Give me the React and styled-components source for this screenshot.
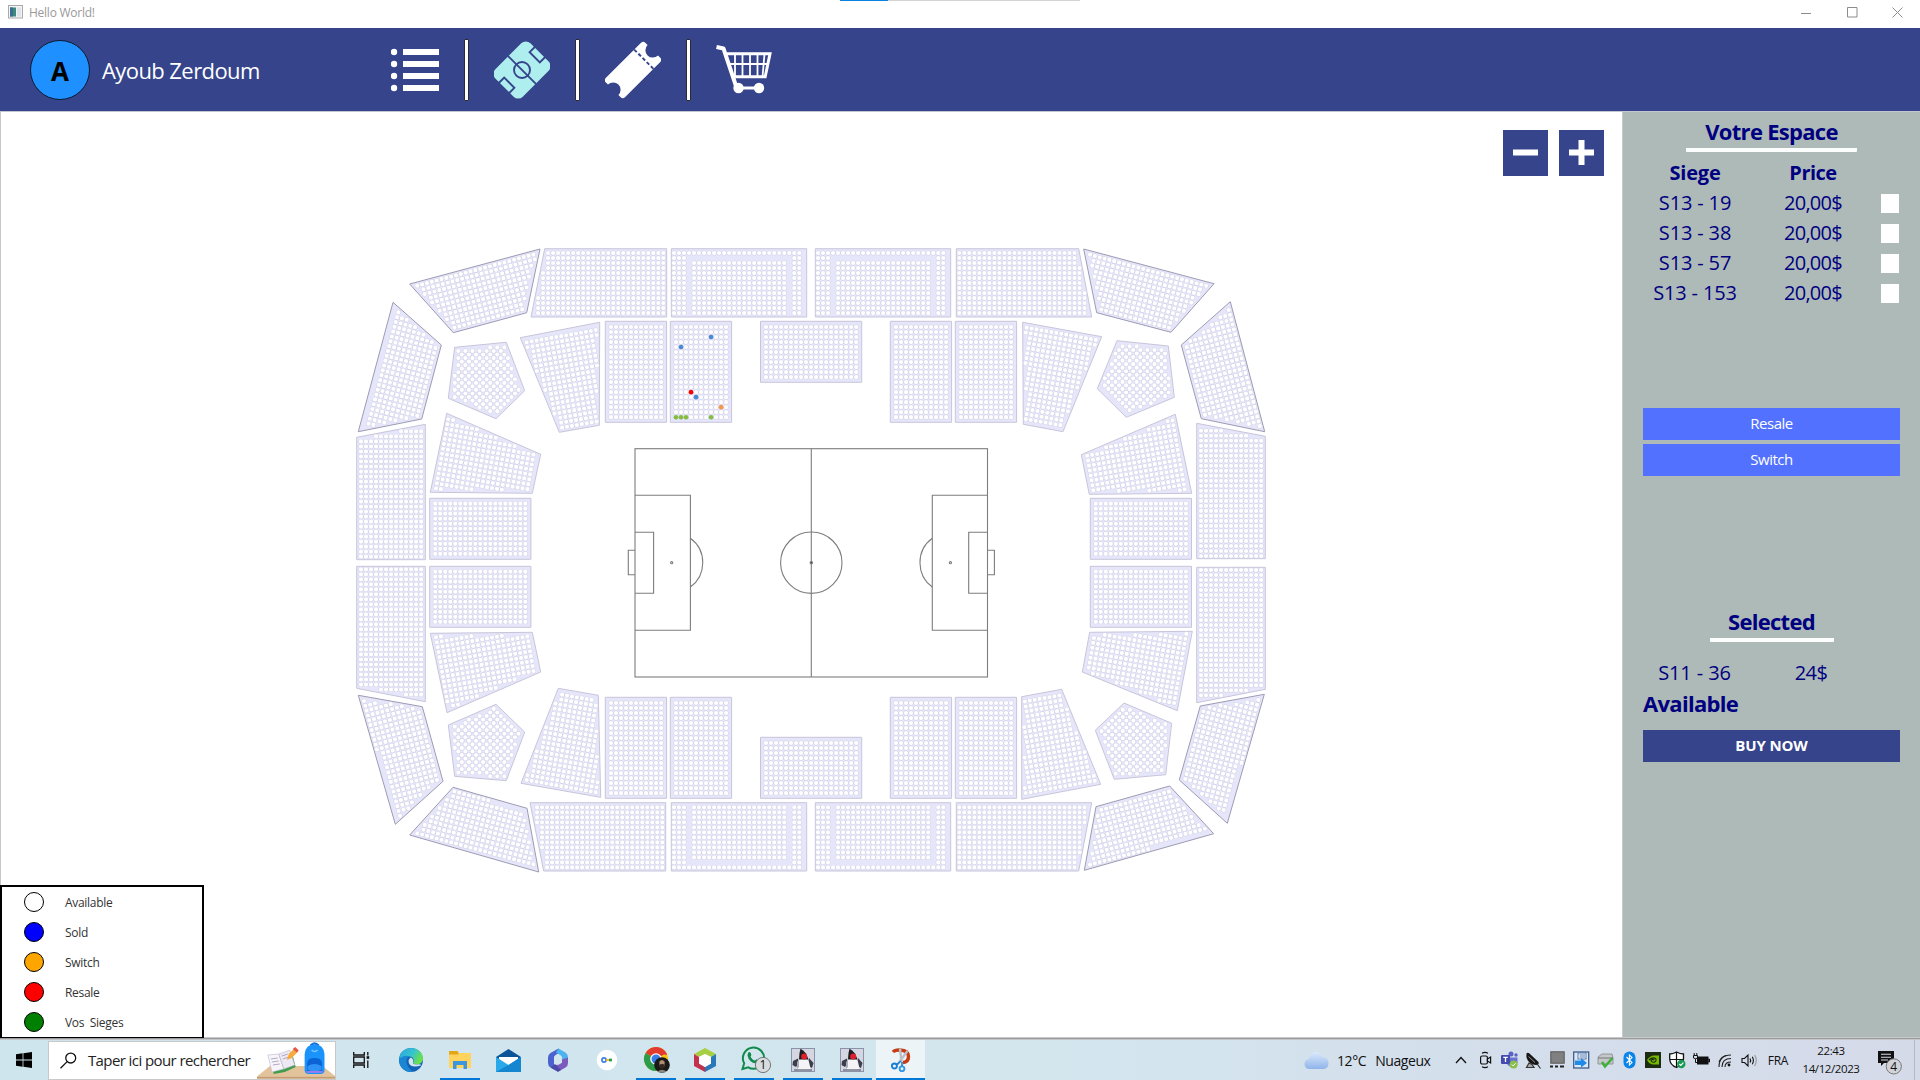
import React from "react";
import styled, { createGlobalStyle, css } from "styled-components";

const GlobalStyle = createGlobalStyle`
  * { box-sizing: border-box; }
  body { margin: 0; background: #fff; font-family: "Open Sans", "Noto Sans", sans-serif; }
  button { font: inherit; border: 0; padding: 0; }
  svg { display: block; }
`;

const NAVY = "#35448b";

const Window = styled.div`
  width: 1920px;
  height: 1080px;
  display: flex;
  flex-direction: column;
  overflow: hidden;
`;

/* ---------- title bar ---------- */
const TitleBar = styled.div`
  position: relative;
  height: 28px;
  flex: none;
  display: flex;
  align-items: center;
  padding: 0 17px 4px 8px;
  font-size: 12px;
  letter-spacing: -0.25px;
  color: #999;
`;
const TitleText = styled.span`
  margin-left: 5px;
  flex: 1;
`;
const WindowControls = styled.div`
  display: flex;
  gap: 34.5px;
`;
const LoadingStrip = styled.div`
  position: absolute;
  top: 0;
  left: 840px;
  width: 240px;
  height: 1px;
  background: linear-gradient(to right, #0a84e0 48px, #d4d4d4 48px);
`;

/* ---------- header ---------- */
const Header = styled.header`
  height: 84px;
  flex: none;
  display: flex;
  align-items: center;
  padding: 1px 0 0 30px;
  background: ${NAVY};
  border-bottom: 1px solid #c4c6d4;
`;
const Avatar = styled.div`
  width: 60px;
  height: 60px;
  border-radius: 50%;
  border: 1px solid #0a1a30;
  background: #1e90ff;
  display: flex;
  align-items: center;
  justify-content: center;
  font-size: 26px;
  font-weight: 700;
  line-height: 60px;
  padding-top: 2px;
  color: #000;
`;
const UserName = styled.div`
  width: 289px;
  margin-left: 12px;
  font-size: 22px;
  line-height: 30px;
  letter-spacing: -0.58px;
  color: #fff;
`;
const Nav = styled.nav`
  display: flex;
  align-items: center;
  gap: 25px;
`;
const Separator = styled.div`
  width: 5px;
  height: 62px;
  background: #fff;
  border: 1px solid #2b2b36;
  border-radius: 1px;
`;

/* ---------- body ---------- */
const Body = styled.div`
  height: 925px;
  flex: none;
  display: flex;
`;
const MapPanel = styled.main`
  position: relative;
  width: 1622px;
  border-left: 1px solid #c8c8c8;
`;
const ZoomControls = styled.div`
  position: absolute;
  top: 18px;
  right: 18px;
  display: flex;
  gap: 11px;
`;
const ZoomButton = styled.button`
  width: 45px;
  height: 46px;
  background: ${NAVY};
  display: flex;
  align-items: center;
  justify-content: center;
  padding-bottom: 1px;
`;
const Legend = styled.div`
  position: absolute;
  left: -1px;
  bottom: -1px;
  width: 204px;
  border: 2px solid #000;
  border-bottom-width: 1px;
  background: #fff;
`;
const LegendRow = styled.div`
  height: 30px;
  display: flex;
  align-items: center;
  padding-left: 22px;
  font-size: 12px;
  letter-spacing: -0.3px;
  color: #333;
  white-space: pre;
`;
const LegendDot = styled.span`
  width: 20px;
  height: 20px;
  margin-right: 21px;
  border-radius: 50%;
  border: 1px solid #000;
  background: ${(p) => p.$color};
`;

/* ---------- sidebar ---------- */
const Sidebar = styled.aside`
  width: 298px;
  padding: 4px 20px 0;
  border-left: 1px solid #c5cac9;
  background: #aebab8;
  color: #000080;
  display: flex;
  flex-direction: column;
`;
const SectionTitle = styled.h2`
  margin: ${(p) => p.$top || 0}px auto 0;
  width: ${(p) => p.$rule}px;
  height: 36px;
  border-bottom: 4px solid #fcfdfd;
  border-radius: 1px;
  text-align: center;
  font-size: 22px;
  line-height: 31px;
  letter-spacing: -0.7px;
  white-space: nowrap;
`;
const SeatRow = styled.div`
  display: grid;
  grid-template-columns: 105px ${(p) => p.$price || 133}px 18px;
  align-items: center;
  height: 30px;
  margin-top: ${(p) => p.$top || 0}px;
  font-size: 20px;
  line-height: 30px;
  text-align: center;
  ${(p) => p.$bold && css`font-weight: 700;`}
`;
const SeatCell = styled.span`
  height: 30px;
  padding-right: ${(p) => p.$shift || 1}px;
  letter-spacing: ${(p) => p.$track || 0}px;
`;
const CheckBox = styled.span`
  width: 18px;
  height: 19px;
  background: #fff;
`;
const Actions = styled.div`
  display: flex;
  flex-direction: column;
  gap: 4px;
  margin-top: ${(p) => p.$top}px;
`;
const ActionButton = styled.button`
  height: 32px;
  background: ${(p) => (p.$primary ? NAVY : "#5271ff")};
  color: #fff;
  && {
    padding-bottom: 2px;
    font-size: 15px;
    font-weight: ${(p) => (p.$primary ? 700 : 400)};
    letter-spacing: ${(p) => (p.$primary ? -0.15 : -0.5)}px;
  }
`;
const Status = styled.div`
  margin-top: 0;
  height: 30px;
  font-size: 22px;
  font-weight: 700;
  line-height: 30px;
  letter-spacing: -0.7px;
`;

/* ---------- taskbar ---------- */
const Edge = styled.div`
  height: 3px;
  flex: none;
  background: linear-gradient(#c9c9c9 1px, #9b9b9b 1px 2px, #c3c6c8 2px);
`;
const Taskbar = styled.footer`
  height: 40px;
  flex: none;
  display: flex;
  align-items: center;
  background: linear-gradient(to right, #cfe5ee, #d3e6ee 55%, #d4dfec 75%, #d5dae9);
  color: #111;
`;
const StartButton = styled.div`
  width: 48px;
  display: flex;
  justify-content: center;
`;
const SearchBox = styled.div`
  width: 288px;
  height: 39px;
  display: flex;
  align-items: center;
  padding-left: 11px;
  background: #fff;
  border: 1px solid #c9c9c9;
  font-size: 15px;
  letter-spacing: -0.58px;
  color: #222;
  overflow: hidden;
`;
const SearchText = styled.span`
  width: 170px;
  margin-left: 11px;
  white-space: nowrap;
`;
const TaskItem = styled.div`
  width: ${(p) => (p.$wide ? 50 : 49)}px;
  height: 40px;
  display: flex;
  align-items: center;
  justify-content: center;
  background: linear-gradient(#0078d7, #0078d7) no-repeat bottom center /
    ${(p) => (p.$active ? "49px" : p.$open ? "40px" : "0")} 2px,
    ${(p) => (p.$active ? "#edf4f8" : "transparent")};
`;
const Apps = styled.div`
  display: flex;
  width: 968px;
`;
const Weather = styled.div`
  display: flex;
  align-items: center;
  width: 145px;
  font-size: 14px;
  letter-spacing: -0.42px;
`;
const Temp = styled.span`
  margin: 0 9px 0 8px;
`;
const Tray = styled.div`
  display: flex;
  align-items: center;
`;
const TrayCell = styled.div`
  width: 24px;
  display: flex;
  justify-content: center;
`;
const Lang = styled.div`
  width: 34px;
  text-align: center;
  font-size: 12px;
  letter-spacing: -0.3px;
`;
const Clock = styled.div`
  width: 90px;
  margin-left: -7px;
  text-align: center;
  font-size: 11.5px;
  line-height: 18px;
  letter-spacing: -0.4px;
  padding-right: 4px;
`;

/* ---------- stadium ---------- */
const PITCH = 5.01;

function seatPath({ pts, at, angle = 0, inset = 2.5, skip }) {
  const c = Math.cos((angle * Math.PI) / 180);
  const s = Math.sin((angle * Math.PI) / 180);
  const n = pts.length;
  let d = "";
  for (let i = -32; i <= 32; i++) {
    for (let j = -32; j <= 32; j++) {
      const x = at[0] + PITCH * (i * c - j * s);
      const y = at[1] + PITCH * (i * s + j * c);
      let ok = true;
      for (let k = 0; k < n && ok; k++) {
        const [ax, ay] = pts[k];
        const [bx, by] = pts[(k + 1) % n];
        const dist =
          ((bx - ax) * (y - ay) - (by - ay) * (x - ax)) / Math.hypot(bx - ax, by - ay);
        if (dist < inset) ok = false;
      }
      if (ok && !(skip && skip(i, j))) d += `M${x.toFixed(2)} ${y.toFixed(2)}h.01`;
    }
  }
  return d;
}

const rect = (x1, y1, x2, y2) => [[x1, y1], [x2, y1], [x2, y2], [x1, y2]];
const aisleTop = (i, j) =>
  (j === 1 && i >= 3 && i <= 23) || (j > 1 && (i === 3 || i === 23));
const aisleBottom = (i, j) =>
  (j === 11 && i >= 3 && i <= 23) || (j < 11 && (i === 3 || i === 23));

const OUTER = "#9d9bb2";
const INNER = "#c8c5da";

const blocks = [
  // corner wings
  { pts: [[409.7, 284], [540, 249], [526.7, 312.7], [453.3, 332.7]], at: [417.3, 285.7], angle: -15, edge: OUTER, inset: 3 },
  { pts: [[393, 302.3], [441.3, 345], [421.7, 419], [358.3, 431.7]], at: [393.5, 311], angle: 15, edge: OUTER, inset: 3 },
  { pts: [[1083.7, 249], [1214, 283.7], [1171, 332.3], [1096.7, 312.7]], at: [1090, 254.7], angle: 15, edge: OUTER, inset: 3 },
  { pts: [[1230.3, 301.7], [1264.7, 431.7], [1201.3, 418.7], [1181.3, 345]], at: [1228.7, 310], angle: -15, edge: OUTER, inset: 3 },
  { pts: [[358.3, 695.3], [422.3, 706.7], [443, 781.3], [395.3, 824.3]], at: [364, 701], angle: -15, edge: OUTER, inset: 3 },
  { pts: [[453, 787.3], [527, 808.3], [538.7, 872], [409.7, 835]], at: [417.3, 833.3], angle: 15, edge: OUTER, inset: 3 },
  { pts: [[1200.3, 706], [1264.3, 694.3], [1227.3, 823.3], [1179.3, 780]], at: [1258.3, 700], angle: 15, edge: OUTER, inset: 3 },
  { pts: [[1096, 806.7], [1169.7, 786], [1213.7, 833.7], [1084.3, 870.3]], at: [1090, 864.7], angle: -15, edge: OUTER, inset: 3 },
  // outer top and bottom
  { pts: [[544.7, 248.7], [666.7, 248.7], [666.7, 317], [531, 317]], at: [663.3, 253] },
  { pts: rect(671.3, 248.7, 806.7, 317), at: [674, 253], skip: aisleTop },
  { pts: rect(815.3, 248.7, 950.7, 317), at: [818, 253], skip: aisleTop },
  { pts: [[956.3, 248.7], [1078.7, 248.7], [1091.7, 317], [956.3, 317]], at: [959.3, 253] },
  { pts: [[530, 802.7], [665.7, 802.7], [665.7, 871], [543.7, 871]], at: [662.3, 807.3] },
  { pts: rect(671.3, 802.7, 806.7, 871), at: [674, 807.3], skip: aisleBottom },
  { pts: rect(815.3, 802.7, 950.7, 871), at: [818, 807.3], skip: aisleBottom },
  { pts: [[956.3, 802.7], [1091.7, 802.7], [1078.7, 871], [956.3, 871]], at: [959.3, 807.3] },
  // outer left and right
  { pts: [[356.7, 437.3], [425.3, 424.3], [425.3, 559.7], [356.7, 559.7]], at: [361, 556.7] },
  { pts: [[356.7, 566.3], [425.3, 566.3], [425.3, 701.7], [356.7, 688.3]], at: [361, 569.3] },
  { pts: [[1196.7, 423.3], [1265.3, 436.3], [1265.3, 558.7], [1196.7, 558.7]], at: [1201, 556] },
  { pts: [[1196.7, 567.3], [1265.3, 567.3], [1265.3, 689.3], [1196.7, 702.7]], at: [1201, 570] },
  // inner corner blocks
  { pts: [[520.3, 337.7], [599.7, 322.3], [599.3, 425.3], [559.3, 432.3]], at: [526.7, 342.3], angle: -10 },
  { pts: [[446.7, 413.3], [540.7, 454.3], [532.3, 493.3], [430.3, 492.3]], at: [436, 488.3], angle: 10 },
  { pts: [[1022.7, 322.3], [1101.7, 336.7], [1063, 431.7], [1023.3, 424.3]], at: [1026.7, 327.7], angle: 10 },
  { pts: [[1175.3, 414.3], [1191.7, 493.3], [1089.3, 494.3], [1081.3, 454.7]], at: [1093.3, 490.3], angle: -10 },
  { pts: [[430.3, 633.3], [532.3, 632.3], [540.7, 672], [447, 712.7]], at: [436, 637.3], angle: -10 },
  { pts: [[558.3, 688.3], [598.3, 695.3], [600.7, 797.3], [521, 783.3]], at: [526.7, 780], angle: 10 },
  { pts: [[1089.7, 632.3], [1192.3, 631.3], [1177.3, 710.7], [1082.3, 672]], at: [1094, 638], angle: 10 },
  { pts: [[1021.7, 696.7], [1061.7, 689.3], [1100.7, 784.3], [1021.7, 799.3]], at: [1025.7, 793], angle: -10 },
  // pentagons
  { pts: [[454.7, 347.3], [506.3, 342.3], [524.7, 390.7], [496, 418.7], [448.3, 398.3]], at: [458.3, 351], angle: 45, inset: 3 },
  { pts: [[1117, 340.7], [1168.3, 346], [1174.3, 397.3], [1126.3, 417.3], [1097.3, 388.7]], at: [1119, 350], angle: 45, inset: 3 },
  { pts: [[448.3, 725], [496, 704.3], [524.7, 732], [506.3, 780.7], [454.7, 776.3]], at: [458.3, 772.7], angle: 45, inset: 3 },
  { pts: [[1124, 703], [1171.7, 723.3], [1165.7, 774.7], [1114.3, 779.3], [1095.3, 730.3]], at: [1115.7, 773.7], angle: 45, inset: 3 },
  // inner rectangles
  ...[605.3, 670.3, 890.3, 955.3].flatMap((x) => [
    { pts: rect(x, 321.3, x + 61.3, 422.3), at: [x + 5.7, 327] },
    { pts: rect(x, 697.3, x + 61.3, 798.3), at: [x + 5.7, 703] },
  ]),
  { pts: rect(760.5, 321.3, 861.7, 382.3), at: [766, 327] },
  { pts: rect(760.5, 737.3, 861.7, 798.3), at: [766, 743] },
  ...[429.7, 1090.3].flatMap((x) => [
    { pts: rect(x, 498.3, x + 101.2, 559.3), at: [x + 5.5, 503.7] },
    { pts: rect(x, 566.3, x + 101.2, 627.3), at: [x + 5.5, 571.7] },
  ]),
];

const TAKEN = [
  [1, 4, "#4a8ad4"], [7, 2, "#4a8ad4"], [4, 14, "#4a8ad4"], [3, 13, "#ff0000"],
  [9, 16, "#f79646"], [0, 18, "#84bd41"], [1, 18, "#84bd41"], [2, 18, "#84bd41"], [7, 18, "#84bd41"],
];

function Stadium() {
  return (
    <svg width="1621" height="925" viewBox="1 112 1621 925">
      {blocks.map((b, i) => {
        const d = seatPath(b);
        return (
          <g key={i}>
            <polygon points={b.pts.map((p) => p.join(",")).join(" ")} fill="#e6e6fa" stroke={b.edge || INNER} strokeWidth="1" strokeLinejoin="round" />
            <path d={d} stroke="#d3d2e8" strokeWidth="5" strokeLinecap="round" />
            <path d={d} stroke="#fff" strokeWidth="4.2" strokeLinecap="round" />
          </g>
        );
      })}
      {TAKEN.map(([c, r, color]) => (
        <circle key={`${c}-${r}`} cx={676 + c * PITCH} cy={327 + r * PITCH} r="2.3" fill={color} />
      ))}
      <g fill="none" stroke="#7d7d7d" strokeWidth="1.1">
        <rect x="635" y="448.7" width="352.5" height="228.3" />
        <path d="M811.3 448.7V677" />
        <circle cx="811.3" cy="562.7" r="30.7" />
        <path d="M635 495.2H690.4V630.3H635M635 532.2H653.6V593.3H635M635 550.3H628.3V574.7H635" />
        <path d="M987.5 495.2H932.3V630.3H987.5M987.5 532.2H968.7V593.3H987.5M987.5 550.3H994.4V574.7H987.5" />
        <path d="M690.4 538.3A30.2 30.2 0 0 1 690.4 587M932.3 538.3A30.2 30.2 0 0 0 932.3 587" />
        <circle cx="671.7" cy="562.7" r="1.1" />
        <circle cx="950.4" cy="562.7" r="1.1" />
        <circle cx="811.3" cy="562.7" r="1.2" fill="#444" />
      </g>
    </svg>
  );
}

/* ---------- icons ---------- */
const AppIcon = () => (
  <svg width="16" height="14" viewBox="0 0 16 14">
    <rect x=".5" y=".5" width="14" height="12.5" fill="#f4f4f4" stroke="#aaa" />
    <rect x="2" y="2.5" width="6" height="9" fill="#3d8a7a" />
    <rect x="2" y="2.5" width="3" height="9" fill="#3b6c98" />
    <rect x="9" y="2.5" width="4" height="9" fill="#dde4ea" />
  </svg>
);
const ControlIcon = ({ d }) => (
  <svg width="11" height="11" viewBox="0 0 11 11" fill="none" stroke="#8c8c8c" strokeWidth="1"><path d={d} /></svg>
);
const ListIcon = () => (
  <svg width="48" height="62" viewBox="0 0 48 62" fill="#fff">
    {[13, 25, 37, 49].map((y) => (
      <g key={y}><circle cx="3" cy={y} r="3.2" /><rect x="12" y={y - 3} width="36" height="6" /></g>
    ))}
  </svg>
);
const PitchIcon = () => (
  <svg width="56" height="58" viewBox="0 0 56 58">
    <g transform="translate(28 29) rotate(-45)">
      <rect x="-24.8" y="-19.4" width="49.6" height="38.8" rx="6.5" fill="#afeeee" />
      <g fill="none" stroke={NAVY} strokeWidth="1.9">
        <path d="M0 -20V20" />
        <circle r="8" />
        <path d="M-26 -7.2H-18V7.2H-26M26 -7.2H18V7.2H26" />
      </g>
    </g>
  </svg>
);
const TicketIcon = () => (
  <svg width="56" height="58" viewBox="0 0 56 58">
    <g transform="translate(28 29) rotate(-45)">
      <path d="M-25 -13.6H25Q28 -13.6 28 -10.6V-7.4A7.4 7.4 0 0 0 28 7.4V10.6Q28 13.6 25 13.6H-25Q-28 13.6 -28 10.6V7.4A7.4 7.4 0 0 0 -28 -7.4V-10.6Q-28 -13.6 -25 -13.6Z" fill="#fff" />
      <path d="M15.3 -13.6V13.6" stroke={NAVY} strokeWidth="1.9" strokeDasharray="3.6 2.3" />
    </g>
  </svg>
);
const CartIcon = () => (
  <svg width="56" height="58" viewBox="0 0 56 58" fill="none" stroke="#fff">
    <path d="M0.5 6L7.5 7.5L20 45" strokeWidth="4" strokeLinejoin="round" />
    <path d="M10.5 12.8H54L49.2 35.8H17.5" strokeWidth="3" />
    <path d="M11.5 23H52M19 13V36M26.5 13V36M34 13V36M41.5 13V36M48.5 13L46.5 36" strokeWidth="1.8" />
    <path d="M22 47H43" strokeWidth="3" />
    <circle cx="22.5" cy="47" r="5.2" fill="#fff" stroke="none" />
    <circle cx="43" cy="47" r="5.2" fill="#fff" stroke="none" />
  </svg>
);
const ZoomGlyph = ({ plus }) => (
  <svg width="25" height="25" viewBox="0 0 25 25" fill="#fff">
    <rect y="9.5" width="25" height="6" />
    {plus && <rect x="9.5" width="6" height="25" />}
  </svg>
);

const WindowsIcon = () => (
  <svg width="16" height="16" viewBox="0 0 16 16"><path d="M0 2.2L6.6 1.3V7.5H0ZM7.4 1.2L16 0V7.5H7.4ZM0 8.4H6.6V14.7L0 13.8ZM7.4 8.4H16V16L7.4 14.8Z" /></svg>
);
const SearchIcon = () => (
  <svg width="17" height="17" viewBox="0 0 17 17" fill="none" stroke="#111" strokeWidth="1.3"><circle cx="10.8" cy="6" r="5" /><path d="M7.2 9.6L.5 16.3" /></svg>
);
const SearchArt = () => (
  <svg width="79" height="38" viewBox="0 0 79 38">
    <path d="M0 35.5L13 25H66L79 35.5Z" fill="#e3c39b" />
    <path d="M0 35.5H79V38H0Z" fill="#c69c6d" />
    <path d="M12 17L24 14.5L35 11L39 26L28 31L17 33Z" fill="#3f9d4e" />
    <path d="M11 14L22 13L27 28L15 31Z" fill="#f7f4fa" stroke="#bdb6cc" strokeWidth=".6" />
    <path d="M22 13L33 9L38 24L27 28Z" fill="#ece9f4" stroke="#bdb6cc" strokeWidth=".6" />
    <path d="M14 18L21 17M15 21L22 20M16 24L23 23M25 15L31 13M26 18L32 16" stroke="#9e98b4" strokeWidth=".8" />
    <path d="M30 19L32 13L38 7L41.5 10.5L35 17Z" fill="#f8ab3c" />
    <path d="M36 8L38.5 5.8L42 9.2L40 11.5Z" fill="#e8564a" />
    <path d="M54 4.5Q58 0 62 4.5" stroke="#1a6fd8" strokeWidth="2.4" fill="none" />
    <path d="M48 13Q49 3.5 58 3.5Q67 3.5 68 13V29Q68 33 64 33H52Q48 33 48 29Z" fill="#1a93fb" />
    <path d="M50.5 22Q51 17 58 17Q65 17 65.5 22V31H50.5Z" fill="#0b63d6" />
    <path d="M51 25Q58 21 65 25V29Q58 32 51 29Z" fill="#2f92f5" />
    <path d="M55 9Q58 12 61 9" stroke="#7cc6ff" strokeWidth="1.5" fill="none" />
    <path d="M50 31H66" stroke="#b57bf0" strokeWidth="1.6" />
  </svg>
);
const TaskViewIcon = () => (
  <svg width="17" height="16" viewBox="0 0 17 16" fill="none" stroke="#111" strokeWidth="1.3"><path d="M.7 0V3H11.3V0M.7 16V13H11.3V16M.7 5V11H11.3V5ZM14.8 0V3.5M14.8 8.5V16" /><rect x="13.6" y="4.2" width="2.6" height="2.6" fill="#111" stroke="none" /></svg>
);
const EdgeIcon = () => (
  <svg width="24" height="24" viewBox="0 0 24 24">
    <defs><linearGradient id="eg" x1="0" y1="0" x2="1" y2=".4"><stop offset="0" stopColor="#2aa5dc" /><stop offset=".6" stopColor="#35c4cf" /><stop offset="1" stopColor="#6ce04d" /></linearGradient></defs>
    <circle cx="12" cy="12" r="12" fill="#1263b5" />
    <path d="M0 11C1 4 6 0 12 0C19 0 24 5 24 10.5C24 14 21 16.5 18 16.5C15 16.5 14 15.5 14 14.5C15.5 12.5 14.5 8.5 10.5 8.5C5.5 8.5 1 10 0 11Z" fill="url(#eg)" />
    <path d="M.2 11Q5 6.8 10 8.2Q6.5 10.5 7.5 15Q9 20.5 14 23.7Q8 25 3.5 20.5Q-.5 16 .2 11Z" fill="#1b86d3" />
    <path d="M12 9.5Q8.5 11.5 10 15.2Q12.5 20.5 22.5 17.2Q21 15.5 18 16.5Q13 16.5 14 14Q15 11.5 12 9.5Z" fill="#d3e6ee" />
  </svg>
);
const FolderIcon = () => (
  <svg width="22" height="20" viewBox="0 0 22 20"><path d="M0 1H8.5L10 3H22V18H0Z" fill="#ffd35c" /><path d="M0 1H8.5L9.5 3V4.5H0Z" fill="#e2a616" /><path d="M4 19V11H18V19H14.5V15H7.5V19Z" fill="#3c96dd" /></svg>
);
const MailIcon = () => (
  <svg width="25" height="23" viewBox="0 0 25 23"><path d="M0 8L12.5 0L25 8V12H0Z" fill="#0a5699" /><path d="M3 8H22V14L12.5 17L3 14Z" fill="#fff" /><path d="M0 8L12.5 16L25 8V23H0Z" fill="#2aa9ea" /><path d="M0 23L12.5 16L25 8V23Z" fill="#1586d0" /></svg>
);
const OfficeIcon = () => (
  <svg width="22" height="24" viewBox="0 0 22 24">
    <path d="M11.5 .5L3.5 5Q1 6.5 1 9.5V15Q1 18 3.5 19.5L7 17.5V9.5Q7 8 8.5 7L14.5 3.5Z" fill="#4c62cf" />
    <path d="M11.5 .5L18.5 4.5Q21 6 21 9V14.5L15 11.5V9.5Q15 8 13.5 7.2L9 4.5Z" fill="#4fb2f0" />
    <path d="M21 9.5V15Q21 18 18.5 19.5L11 23.8L3.5 19.5L7 17.5L10 16.8Q11 17 12 16.5L15 14.7V11.5Z" fill="#7b5bbd" />
    <path d="M3.5 19.5L11 23.8L14 22L8 16Z" fill="#4a4aa8" />
    <path d="M11 6.8L15 9.2V14.2L11 16.6L7 14.2V9.2Z" fill="#d3e6ee" />
  </svg>
);
const KeyIcon = () => (
  <svg width="22" height="22" viewBox="0 0 22 22"><circle cx="11" cy="11" r="10.3" fill="#fff" /><circle cx="8" cy="11" r="2.1" fill="none" stroke="#3f7ee8" strokeWidth="1.7" /><path d="M10 11H13.5" stroke="#f2b51d" strokeWidth="1.8" /><path d="M13 11H16" stroke="#2f9f55" strokeWidth="2.8" /></svg>
);
const ChromeIcon = () => (
  <svg width="28" height="26" viewBox="-2 0 28 26">
    <circle cx="12" cy="12" r="12" fill="#fbc116" />
    <path d="M12 12L1.6 6A12 12 0 0 1 22.4 6Z" fill="#e33b2e" />
    <path d="M12 12L1.6 6A12 12 0 0 0 12 24Z" fill="#2c9c4b" />
    <path d="M12 6H22.4A12 12 0 0 1 23 8Z" fill="#e33b2e" />
    <circle cx="12" cy="12" r="5.8" fill="#fff" /><circle cx="12" cy="12" r="4.5" fill="#3a7de8" />
    <circle cx="18" cy="18" r="7.8" fill="#191a17" />
    <path d="M15.4 14.5Q18 11.5 20.6 14.5V18.5Q20 21 18 21Q16 21 15.4 18.5Z" fill="#b08b74" />
    <path d="M15.4 17.5Q18 16.5 20.6 17.5V20Q18 23.5 15.4 20Z" fill="#33261f" /><path d="M13.5 24.4Q18 21 22.5 24.4Q18 26.5 13.5 24.4Z" fill="#8a8a80" />
  </svg>
);
const NetBeansIcon = () => (
  <svg width="22" height="24" viewBox="0 0 22 24"><path d="M11 0L22 6L17 9L11 6L5 9L0 6Z" fill="#a8cf42" /><path d="M0 6L5 9V15.5L11 19V24L0 18Z" fill="#c4314f" /><path d="M22 6L17 9V15.5L11 19V24L22 18Z" fill="#2a78b8" /><path d="M11 6L17 9V15.5L11 19L5 15.5V9Z" fill="#fff" /></svg>
);
const WhatsAppIcon = () => (
  <svg width="36" height="28" viewBox="-5 0 36 28">
    <path d="M1.5 23L3.2 17.2A10.6 10.6 0 1 1 7.2 21.3Z" fill="none" stroke="#128a4c" strokeWidth="2" />
    <path d="M7 7Q8.5 5 9.7 7L10.4 9Q9 10.5 10 11.5Q11.5 14 14 14.5L15.5 13.2L18 14.5Q18 17.5 15 17.5Q8 16.5 6.5 9.5Z" fill="#128a4c" />
    <circle cx="22" cy="19" r="7.6" fill="#d9dcdf" stroke="#777" strokeWidth="1" />
    <text x="22" y="23.4" fontSize="12" textAnchor="middle" fill="#111">1</text>
  </svg>
);
const DukeIcon = () => (
  <svg width="24" height="24" viewBox="0 0 24 24">
    <rect x=".5" y=".5" width="23" height="23" fill="#d4d7e2" stroke="#8b93a8" />
    <path d="M2 13L7 10.5L8 15L5 19L1.5 17ZM18 10L22.5 15L21 20L17 18Z" fill="#3c3e4a" />
    <path d="M9 9H15L18 14L19.5 20.5L17 22.5H7L6 16Z" fill="#f4f4f6" />
    <path d="M9.5 .8Q12 2 15 5.5L17.5 11.5H8L8.5 5Z" fill="#1d1d22" />
    <path d="M6 14L8 12V19L6 21Z" fill="#a9adba" />
    <circle cx="13.2" cy="8.5" r="3" fill="#e01f2d" />
    <path d="M3 22H21" stroke="#6a7080" strokeWidth="1.4" />
  </svg>
);
const SnipIcon = () => (
  <svg width="20" height="24" viewBox="0 0 20 24" fill="none">
    <path d="M2 4Q4 1.7 9 2Q17.5 2.5 17.5 8.5Q17.5 14 12 14.5" stroke="#c93a12" strokeWidth="3.4" />
    <path d="M9 .5L10.5 14M16.5 3L6 17" stroke="#b9c0c8" strokeWidth="2.4" />
    <circle cx="3.4" cy="18" r="2.5" stroke="#1b7fd0" strokeWidth="1.9" /><circle cx="11" cy="20.8" r="2.4" stroke="#3196e2" strokeWidth="1.9" />
    <path d="M6 16.5L10 13M11 18V14" stroke="#1b7fd0" strokeWidth="1.6" />
  </svg>
);
const CloudIcon = () => (
  <svg width="25" height="19" viewBox="0 0 25 19">
    <defs><linearGradient id="cl" x1="0" y1="0" x2="0" y2="1"><stop offset="0" stopColor="#dbe9fb" /><stop offset="1" stopColor="#8fb4ea" /></linearGradient></defs>
    <path d="M6 18Q.5 18 .5 13Q.5 8.5 5 8Q6 1 12 1Q17 1 18.5 6Q24.5 6.5 24.5 12Q24.5 18 18.5 18Z" fill="url(#cl)" />
  </svg>
);

const trayIcons = [
  <svg width="12" height="18" viewBox="0 0 12 18"><path d="M1 12L6 6.5L11 12" fill="none" stroke="#111" strokeWidth="1.3" /></svg>,
  <svg width="13" height="18" viewBox="0 0 13 18" fill="none" stroke="#111" strokeWidth="1.2"><path d="M3 2.2Q6 .6 9 2.2M3 15.8Q6 17.4 9 15.8" /><rect x="1.6" y="5" width="6.8" height="8" rx="1.5" /><path d="M8.4 8L11.6 6V12L8.4 10Z" /></svg>,
  <svg width="17" height="18" viewBox="0 0 17 18"><circle cx="10" cy="3" r="2.5" fill="#5b62c4" /><circle cx="15" cy="4" r="1.7" fill="#5b62c4" /><path d="M6 6.5H16.5V12Q15 16 10 16Q7 15 6 13Z" fill="#6a70d4" /><rect y="4" width="9" height="9" rx="1" fill="#444bb0" /><path d="M2.3 6.4H6.8M4.5 6.4V11" stroke="#fff" strokeWidth="1.3" /><circle cx="12.6" cy="13.5" r="4" fill="#8abf4b" /><path d="M10.8 13.5L12.2 14.9L14.6 12.3" stroke="#fff" fill="none" /></svg>,
  <svg width="16" height="17" viewBox="0 0 16 17"><path d="M1.5 1.5Q2.5 0 4.5 1.5L13.5 10Q14.5 13 11 13Q5 12.5 2.5 8Q.8 4.5 1.5 1.5Z" fill="#161616" /><path d="M3.5 4.5L10 10.5" stroke="#999" fill="none" /><path d="M4 11L1.5 15.5H9L7 12.5ZM12.5 12.5L15.5 16.5" stroke="#333" strokeWidth="1.2" fill="#aaa" /></svg>,
  <svg width="15" height="18" viewBox="0 0 15 18"><rect x=".8" y=".8" width="13.4" height="11.4" fill="#808080" stroke="#555" /><path d="M0 15.5H3M5 15.5H8M10 15.5H14" stroke="#222" strokeWidth="2.2" /></svg>,
  <svg width="17" height="18" viewBox="0 0 17 18"><rect x=".7" y="1" width="15" height="16" fill="#dce8f5" stroke="#3d5d88" strokeWidth="1.3" /><rect x="5" y="2" width="8" height="6" fill="#fff" stroke="#5177ad" /><path d="M6.5 4H12M6.5 6H12" stroke="#5177ad" /><path d="M2 9.5H8V7L14 12L8 16.5V14H2Z" fill="#1e8be8" /></svg>,
  <svg width="17" height="17" viewBox="0 0 17 17"><path d="M1 5L5 2H15L16 6V12H1Z" fill="#c4c8ca" stroke="#888" strokeWidth=".8" /><path d="M1 6H16" stroke="#777" /><path d="M5 10L8 14.5L15.5 6" fill="none" stroke="#3eb13c" strokeWidth="2.5" /></svg>,
  <svg width="13" height="18" viewBox="0 0 13 18"><rect x=".5" y=".5" width="12" height="17" rx="6" fill="#0a84e8" /><path d="M3.5 6L9 11.6L6.4 14V4L9 6.4L3.5 12" fill="none" stroke="#fff" strokeWidth="1.1" /></svg>,
  <svg width="16" height="18" viewBox="0 0 16 18"><rect y="1" width="16" height="16" fill="#1d2b12" /><path d="M2 9Q5 4.5 9 4.5H14V13.5H8Q4 13 2 9Z" fill="#76b900" /><path d="M4 9Q7 5.8 10.5 7.4Q12 9 9.8 11Q7 12 6 9.4Q7.5 7.6 9.3 9" fill="none" stroke="#1d2b12" strokeWidth="1.1" /></svg>,
  <svg width="17" height="18" viewBox="0 0 17 18"><path d="M7.5 1Q11 3 14.5 3V8Q14 14 7.5 16.5Q1 14 .7 8V3Q4 3 7.5 1Z" fill="#fff" stroke="#111" strokeWidth="1.3" /><path d="M7.5 1V16M1 8.5H14" stroke="#111" strokeWidth="1.2" /><circle cx="12.3" cy="13" r="4.2" fill="#169b50" /><path d="M10.3 13L11.8 14.5L14.4 11.7" stroke="#fff" strokeWidth="1.2" fill="none" /></svg>,
  <svg width="17" height="17" viewBox="0 0 17 17"><rect x="4.5" y="5" width="10.5" height="7" fill="#111" stroke="#111" /><path d="M15.5 7H16.5V10H15.5" stroke="#111" /><path d="M1.2 1V3.5M3.8 1V3.5M.5 3.5H4.5V6Q2.5 7.5 .5 6ZM2.5 7V10.5H4.5" stroke="#111" fill="none" /></svg>,
  <svg width="14" height="15" viewBox="0 0 14 15" fill="none" stroke="#222" strokeWidth="1.1"><path d="M1 14Q1 2 13 2M4 14Q4 5.5 13 5.5M7 14Q7 9 13 9" /><circle cx="11" cy="12" r="1.4" fill="#111" stroke="none" /><path d="M1 9Q3 4 8 2.5" /></svg>,
  <svg width="17" height="15" viewBox="0 0 17 15" fill="none" stroke="#111" strokeWidth="1.1"><path d="M1 5.5H3.5L7 2V13L3.5 9.5H1Z" /><path d="M9 5.5Q10.3 7.5 9 9.5M11.3 3.8Q13.5 7.5 11.3 11.2" /><path d="M13.6 2Q17 7.5 13.6 13" stroke="#999" /></svg>,
];
const NoticeIcon = () => (
  <svg width="26" height="26" viewBox="0 0 26 26">
    <path d="M0 1H16V13H6L3 16V13H0Z" fill="#111" />
    <path d="M3 4.3H13M3 7.2H13M3 10H10" stroke="#d5dae9" strokeWidth="1.1" />
    <circle cx="15.8" cy="16.4" r="7.6" fill="#d2d3d8" stroke="#777" />
    <text x="15.8" y="20.8" fontSize="12" textAnchor="middle" fill="#111">4</text>
  </svg>
);
const Notice = styled.div`
  width: 37px;
  height: 40px;
  padding-top: 10px;
  border-right: 1px solid #b4b9c6;
`;

const seats = ["S13 - 19", "S13 - 38", "S13 - 57", "S13 - 153"];
const legend = [["#fff", "Available"], ["#0000ff", "Sold"], ["#ffa500", "Switch"], ["#ff0000", "Resale"], ["#008000", "Vos  Sieges"]];
const apps = [
  { icon: <EdgeIcon /> }, { icon: <FolderIcon />, open: true }, { icon: <MailIcon /> }, { icon: <OfficeIcon /> },
  { icon: <KeyIcon /> }, { icon: <ChromeIcon />, open: true }, { icon: <NetBeansIcon />, open: true },
  { icon: <WhatsAppIcon />, open: true }, { icon: <DukeIcon />, open: true }, { icon: <DukeIcon />, open: true },
  { icon: <SnipIcon />, active: true },
];

export default function App() {
  return (
    <Window>
      <GlobalStyle />
      <TitleBar>
        <LoadingStrip />
        <AppIcon />
        <TitleText>Hello World!</TitleText>
        <WindowControls>
          <ControlIcon d="M0 6.5H10" />
          <ControlIcon d="M.5 .5H10V10H.5Z" />
          <ControlIcon d="M.5 .5L10.5 10.5M10.5 .5L.5 10.5" />
        </WindowControls>
      </TitleBar>
      <Header>
        <Avatar>A</Avatar>
        <UserName>Ayoub Zerdoum</UserName>
        <Nav>
          <ListIcon />
          <Separator />
          <PitchIcon />
          <Separator />
          <TicketIcon />
          <Separator />
          <CartIcon />
        </Nav>
      </Header>
      <Body>
        <MapPanel>
          <Stadium />
          <ZoomControls>
            <ZoomButton aria-label="Zoom out"><ZoomGlyph /></ZoomButton>
            <ZoomButton aria-label="Zoom in"><ZoomGlyph plus /></ZoomButton>
          </ZoomControls>
          <Legend>
            {legend.map(([color, label]) => (
              <LegendRow key={label}><LegendDot $color={color} />{label}</LegendRow>
            ))}
          </Legend>
        </MapPanel>
        <Sidebar>
          <SectionTitle $rule={171}>Votre Espace</SectionTitle>
          <SeatRow $bold $top={6}>
            <SeatCell $track={-0.2}>Siege</SeatCell>
            <SeatCell $track={-0.5} $shift={3}>Price</SeatCell>
          </SeatRow>
          {seats.map((s) => (
            <SeatRow key={s}>
              <SeatCell $track={-0.15}>{s}</SeatCell>
              <SeatCell $track={-0.75} $shift={3}>20,00$</SeatCell>
              <CheckBox />
            </SeatRow>
          ))}
          <Actions $top={100}>
            <ActionButton>Resale</ActionButton>
            <ActionButton>Switch</ActionButton>
          </Actions>
          <SectionTitle $rule={124} $top={130}>Selected</SectionTitle>
          <SeatRow $top={16} $price={127}>
            <SeatCell $track={-0.1} $shift={2}>S11 - 36</SeatCell>
            <SeatCell $track={-0.6}>24$</SeatCell>
          </SeatRow>
          <Status>Available</Status>
          <Actions $top={12}>
            <ActionButton $primary>BUY NOW</ActionButton>
          </Actions>
        </Sidebar>
      </Body>
      <Edge />
      <Taskbar>
        <StartButton><WindowsIcon /></StartButton>
        <SearchBox>
          <SearchIcon />
          <SearchText>Taper ici pour rechercher</SearchText>
          <SearchArt />
        </SearchBox>
        <Apps>
          <TaskItem $wide><TaskViewIcon /></TaskItem>
          {apps.map((a, i) => (
            <TaskItem key={i} $open={a.open} $active={a.active}>{a.icon}</TaskItem>
          ))}
        </Apps>
        <Weather><CloudIcon /><Temp>12°C</Temp>Nuageux</Weather>
        <Tray>
          {trayIcons.map((icon, i) => <TrayCell key={i}>{icon}</TrayCell>)}
          <Lang>FRA</Lang>
        </Tray>
        <Clock>22:43<br />14/12/2023</Clock>
        <Notice><NoticeIcon /></Notice>
      </Taskbar>
    </Window>
  );
}
